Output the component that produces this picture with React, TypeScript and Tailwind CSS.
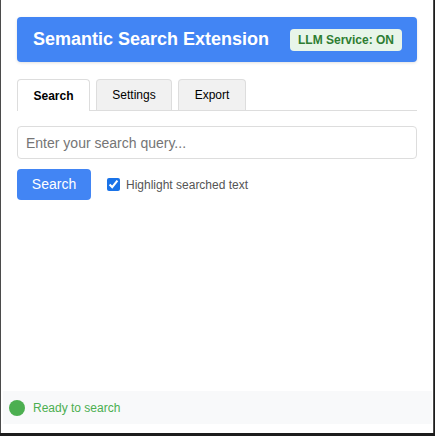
import React from "react";

export default function App() {
  const font = { fontFamily: '"Liberation Sans", Arial, sans-serif' };
  return (
    <div className="w-[435px] h-[436px] bg-[#1c1c1c]" style={font}>
      <div className="w-[434px] h-[433px] bg-white border-l border-r border-[#4b4b4b] flex flex-col">
        <div className="px-4 pt-[17px] flex flex-col">
          <div className="h-[45px] bg-[#4285f4] rounded-[4px] flex items-center justify-between pl-4 pr-[15px] shadow-[0_1px_3px_rgba(0,0,0,0.12)]">
            <span className="text-white font-bold text-[18px] leading-[21px]">Semantic Search Extension</span>
            <span className="bg-[#e8f5e9] text-[#2e7d32] font-bold text-[12px] leading-[14px] px-2 py-1 rounded-[4px]">LLM Service: ON</span>
          </div>

          <div className="mt-[17px] flex items-end gap-[6px] border-b border-[#dddddd] h-[32px]">
            <div className="w-[73px] h-[32px] -mb-px flex items-center justify-center bg-white border border-b-0 border-[#dddddd] rounded-t-[4px] text-[12px] font-bold text-black">Search</div>
            <div className="w-[76px] h-[31px] flex items-center justify-center bg-[#f1f1f1] border border-b-0 border-[#dddddd] rounded-t-[4px] text-[12px] text-black">Settings</div>
            <div className="w-[68px] h-[31px] flex items-center justify-center bg-[#f1f1f1] border border-b-0 border-[#dddddd] rounded-t-[4px] text-[12px] text-black">Export</div>
          </div>

          <input
            className="mt-[15px] h-[33px] w-full border border-[#dddddd] rounded-[4px] px-2 text-[14px] text-[#333] placeholder:text-[#757575] outline-none"
            placeholder="Enter your search query..."
            style={font}
          />

          <div className="mt-[10px] flex items-center">
            <button className="w-[74px] h-[31px] bg-[#4285f4] text-white text-[14px] rounded-[4px]" style={font}>Search</button>
            <label className="ml-4 flex items-center gap-[6px] text-[12px] text-[#555]">
              <input type="checkbox" defaultChecked className="w-[13px] h-[13px] accent-[#1a73e8] m-0" />
              <span>Highlight searched text</span>
            </label>
          </div>
        </div>

        <div className="flex-1" />

        <div className="ml-[2px] mr-px mb-[9px] h-[33px] bg-[#f8f9fa] flex items-center pl-[6px] gap-2">
          <span className="w-4 h-4 rounded-full bg-[#4caf50]" />
          <span className="text-[12px] text-[#4caf50]">Ready to search</span>
        </div>
      </div>
    </div>
  );
}
